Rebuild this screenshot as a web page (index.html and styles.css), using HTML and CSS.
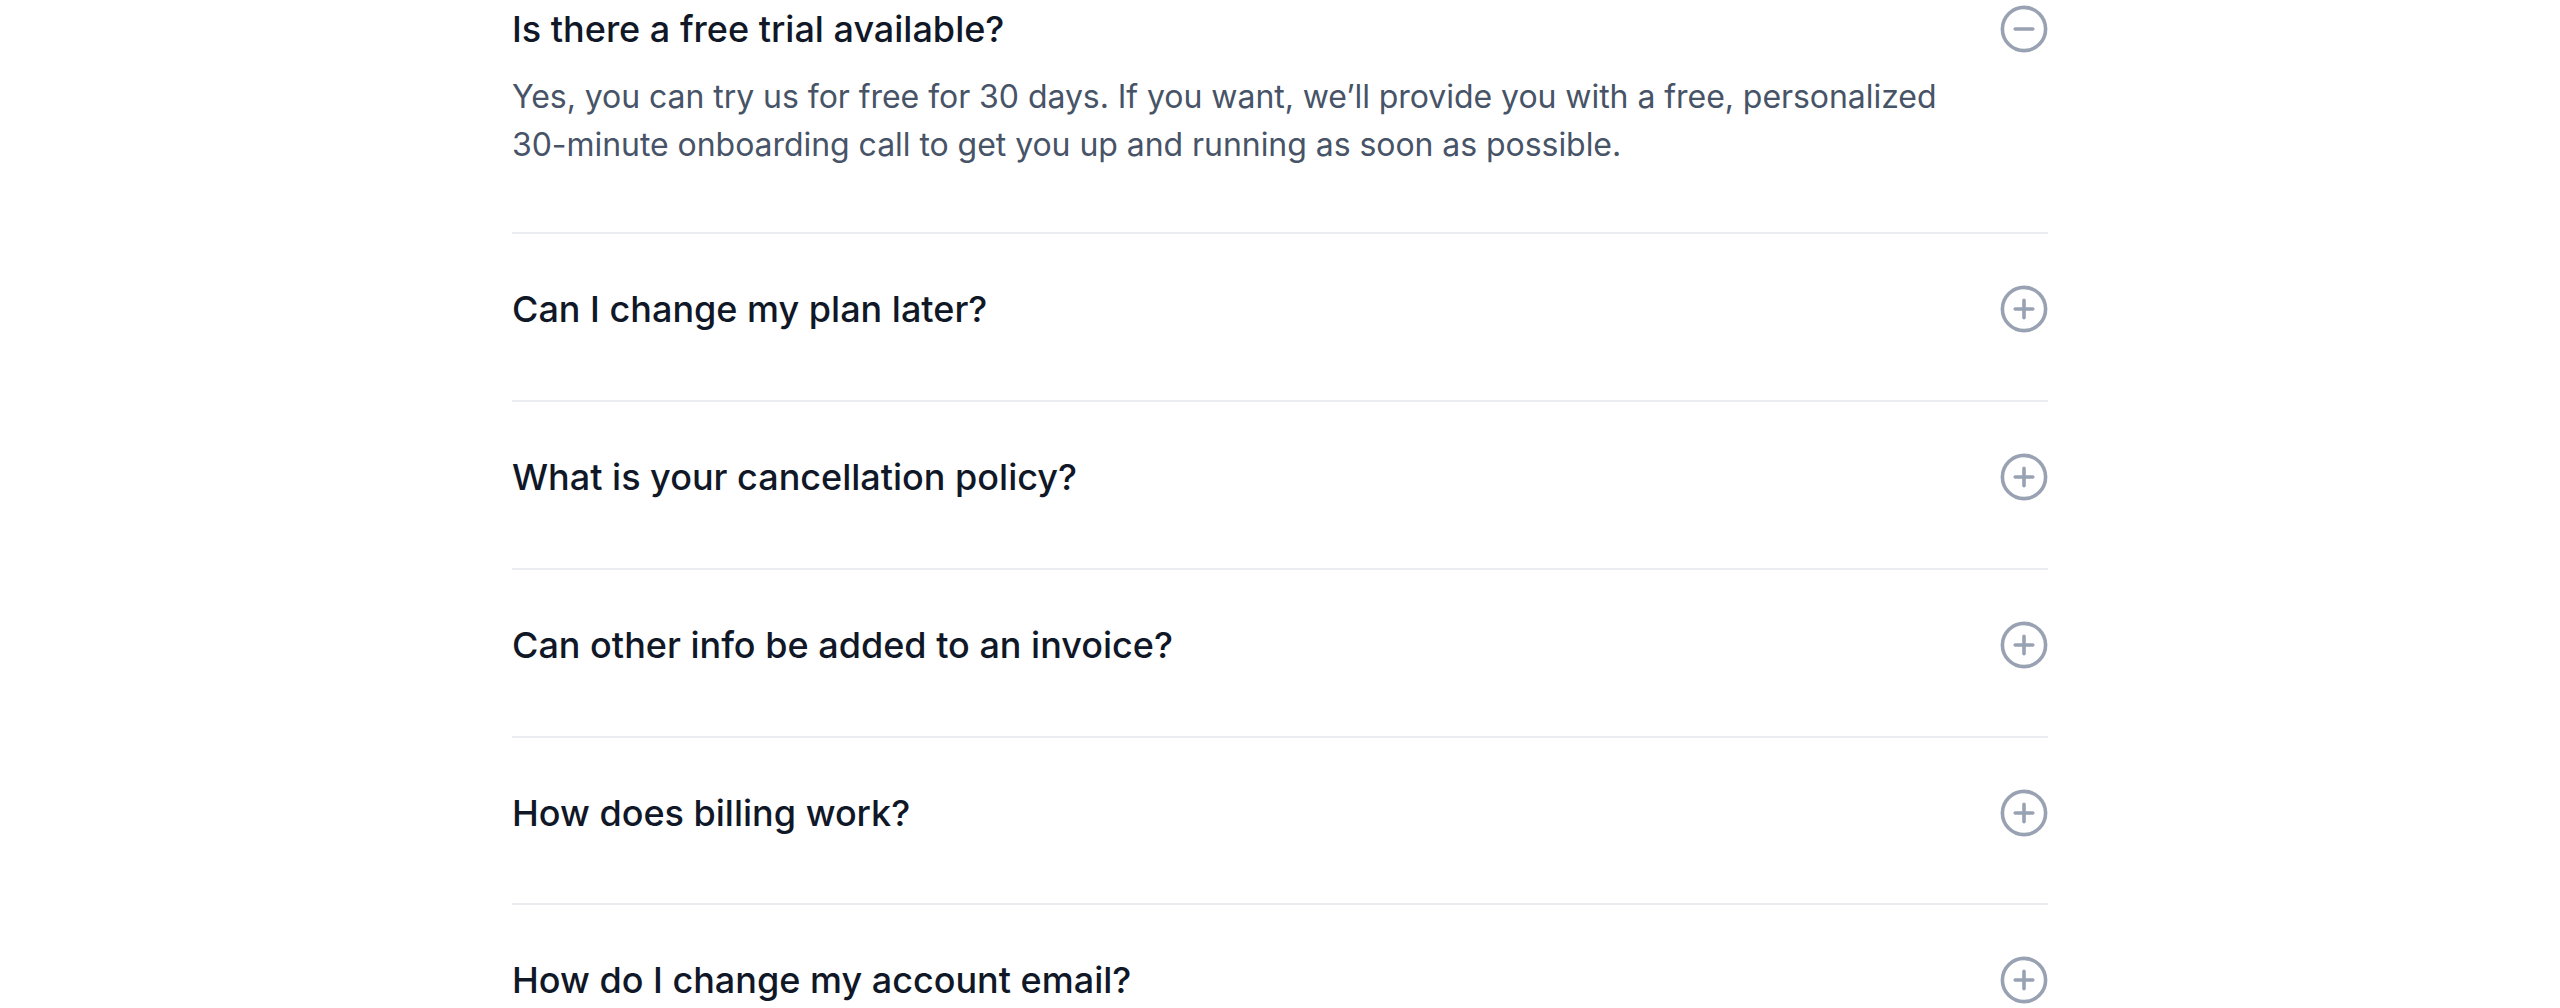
FILE: index.html
```html
<!DOCTYPE html>
<html lang="en">
<head>
<meta charset="utf-8">
<title>FAQ</title>
<link rel="stylesheet" href="styles.css">
</head>
<body>
<main class="faq">
  <div class="item open">
    <div class="q-row">
      <h3 class="question">Is there a free trial available?</h3>
      <svg class="icon" viewBox="0 0 24 24" fill="none" stroke="currentColor" stroke-width="1.8" stroke-linecap="round"><circle cx="12" cy="12" r="10.8"/><path d="M7.6 12h8.8"/></svg>
    </div>
    <p class="answer">Yes, you can try us for free for 30 days. If you want, we’ll provide you with a free, personalized 30-minute onboarding call to get you up and running as soon as possible.</p>
  </div>
  <div class="item">
    <div class="q-row">
      <h3 class="question">Can I change my plan later?</h3>
      <svg class="icon" viewBox="0 0 24 24" fill="none" stroke="currentColor" stroke-width="1.8" stroke-linecap="round"><circle cx="12" cy="12" r="10.8"/><path d="M12 7.6v8.8M7.6 12h8.8"/></svg>
    </div>
  </div>
  <div class="item">
    <div class="q-row">
      <h3 class="question">What is your cancellation policy?</h3>
      <svg class="icon" viewBox="0 0 24 24" fill="none" stroke="currentColor" stroke-width="1.8" stroke-linecap="round"><circle cx="12" cy="12" r="10.8"/><path d="M12 7.6v8.8M7.6 12h8.8"/></svg>
    </div>
  </div>
  <div class="item">
    <div class="q-row">
      <h3 class="question">Can other info be added to an invoice?</h3>
      <svg class="icon" viewBox="0 0 24 24" fill="none" stroke="currentColor" stroke-width="1.8" stroke-linecap="round"><circle cx="12" cy="12" r="10.8"/><path d="M12 7.6v8.8M7.6 12h8.8"/></svg>
    </div>
  </div>
  <div class="item">
    <div class="q-row">
      <h3 class="question">How does billing work?</h3>
      <svg class="icon" viewBox="0 0 24 24" fill="none" stroke="currentColor" stroke-width="1.8" stroke-linecap="round"><circle cx="12" cy="12" r="10.8"/><path d="M12 7.6v8.8M7.6 12h8.8"/></svg>
    </div>
  </div>
  <div class="item">
    <div class="q-row">
      <h3 class="question">How do I change my account email?</h3>
      <svg class="icon" viewBox="0 0 24 24" fill="none" stroke="currentColor" stroke-width="1.8" stroke-linecap="round"><circle cx="12" cy="12" r="10.8"/><path d="M12 7.6v8.8M7.6 12h8.8"/></svg>
    </div>
  </div>
</main>
</body>
</html>
```

FILE: styles.css
```css
html, body {
  margin: 0;
  padding: 0;
  background: #ffffff;
  overflow: hidden;
  height: 100%;
}

body {
  font-family: Inter, "Noto Sans", "Liberation Sans", sans-serif;
  -webkit-font-smoothing: antialiased;
}

.faq {
  width: 1536px;
  margin: 0 auto;
  padding-top: 1px;
}

.item {
  padding-top: 47px;
  padding-bottom: 62.8px;
  border-top: 2px solid #EAECF0;
}

.item:first-child {
  padding-top: 0;
  padding-bottom: 63.25px;
  border-top: none;
}

.q-row {
  display: flex;
  justify-content: space-between;
  align-items: flex-start;
  gap: 48px;
}

.question {
  margin: 0;
  font-size: 36px;
  line-height: 56px;
  font-weight: 500;
  color: #101828;
}

.icon {
  flex: none;
  width: 48px;
  height: 48px;
  margin-top: 4px;
  color: #98A2B3;
}

.answer {
  margin: 16px 0 0 0;
  padding-right: 96px;
  font-size: 32px;
  line-height: 48px;
  font-weight: 400;
  letter-spacing: -0.05px;
  color: #475467;
}
```
